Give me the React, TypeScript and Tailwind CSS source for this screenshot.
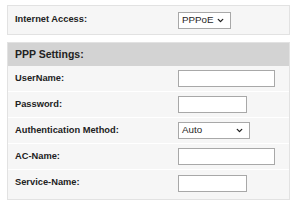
import { ChevronDown } from "lucide-react";

const font = { fontFamily: '"Liberation Sans", Arial, sans-serif' };

type Row = { label: string; kind: "text" | "short" | "select"; value?: string };

const rows: Row[] = [
  { label: "UserName:", kind: "text" },
  { label: "Password:", kind: "short" },
  { label: "Authentication Method:", kind: "select", value: "Auto" },
  { label: "AC-Name:", kind: "text" },
  { label: "Service-Name:", kind: "short" },
];

function FakeSelect({ value, width }: { value: string; width: string }) {
  return (
    <div className={`flex h-[17px] ${width} items-center justify-between border border-[#a8a8a8] bg-white pl-[3px] pr-[5px] text-[9.8px] text-[#1f1f1f]`}>
      <span>{value}</span>
      <ChevronDown size={9} strokeWidth={3.5} className="text-[#1f1f1f]" />
    </div>
  );
}

export default function App() {
  return (
    <div className="h-[206px] w-[300px] bg-white px-[7px] pt-[5px] text-[#222]" style={font}>
      <div className="flex h-[30px] w-[283px] items-center border border-[#e2e2e2] bg-[#f6f6f6] pl-[7px]">
        <span className="w-[163px] text-[9.3px] font-bold">Internet Access:</span>
        <FakeSelect value="PPPoE" width="w-[53px]" />
      </div>

      <div className="mt-[7px] w-[283px] border border-[#e2e2e2] bg-[#f6f6f6] pb-[3px]">
        <div className="flex h-[23px] items-center bg-[#d3d3d3] pl-[7px] text-[10.5px] font-bold">PPP Settings:</div>
        {rows.map((row) => (
          <div key={row.label} className="flex h-[26px] items-center border-b border-white pl-[7px] last:border-b-0">
            <span className="w-[163px] text-[9.3px] font-bold">{row.label}</span>
            {row.kind === "select" ? (
              <FakeSelect value={row.value ?? ""} width="w-[72px]" />
            ) : (
              <input
                className={`h-[17px] ${row.kind === "text" ? "w-[97px]" : "w-[69px]"} border border-[#a8a8a8] bg-white`}
                aria-label={row.label}
              />
            )}
          </div>
        ))}
      </div>
    </div>
  );
}
